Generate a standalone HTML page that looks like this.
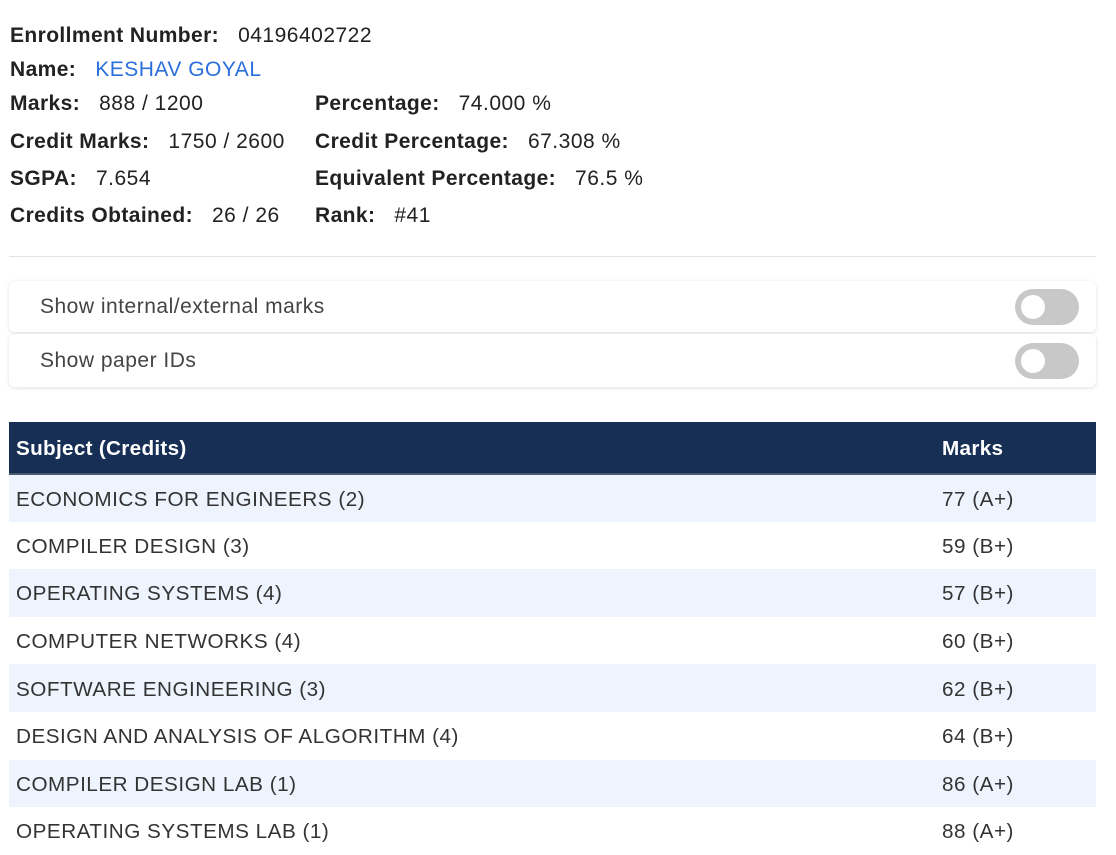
<!DOCTYPE html>
<html><head><style>
body{margin:0;width:1116px;height:853px;overflow:hidden;background:#fff;font-family:"Liberation Sans",sans-serif;color:#222;letter-spacing:0.5px;}
.info{position:absolute;left:10px;font-size:21px;white-space:nowrap;}
.info b,.c2 b{font-weight:bold;color:#222;letter-spacing:0.4px;}
.c2{position:absolute;left:315px;font-size:21px;white-space:nowrap;}
hr{position:absolute;top:256px;left:9px;width:1087px;margin:0;border:0;border-top:1px solid #e3e3e3;}
.card{position:absolute;left:9px;width:1087px;background:#fff;border-radius:6px;box-shadow:0 1px 4px rgba(0,0,0,0.12);font-size:21px;color:#444;}
.card span{position:absolute;left:31px;top:50%;transform:translateY(-50%);}
.tg{position:absolute;left:1006px;top:50%;transform:translateY(-50%);width:64px;height:36px;border-radius:18px;background:#c8c8c8;}
.tg:after{content:"";position:absolute;left:6px;top:6px;width:24px;height:24px;border-radius:50%;background:#fff;}
table{position:absolute;top:422px;left:9px;width:1087px;border-collapse:collapse;font-size:20.7px;table-layout:fixed;}
th{background:#172e55;color:#fff;text-align:left;height:48px;padding:3px 0 0 7px;border-bottom:2px solid #4a5870;font-weight:bold;letter-spacing:0.3px;}
td{height:47.6px;padding:3px 0 0 7px;color:#333;box-sizing:border-box;}
tr:nth-child(even) td{background:#edf4fe;}
</style></head><body>
<div class="info" style="top:24px"><b>Enrollment Number:</b>&nbsp;&nbsp; 04196402722</div>
<div class="info" style="top:58px"><b>Name:</b>&nbsp;&nbsp; <span style="color:#2a6fdb">KESHAV GOYAL</span></div>
<div class="info" style="top:92px"><b>Marks:</b>&nbsp;&nbsp; 888 / 1200</div>
<div class="c2" style="top:92px"><b>Percentage:</b>&nbsp;&nbsp; 74.000 %</div>
<div class="info" style="top:130px"><b>Credit Marks:</b>&nbsp;&nbsp; 1750 / 2600</div>
<div class="c2" style="top:130px"><b>Credit Percentage:</b>&nbsp;&nbsp; 67.308 %</div>
<div class="info" style="top:167px"><b>SGPA:</b>&nbsp;&nbsp; 7.654</div>
<div class="c2" style="top:167px"><b>Equivalent Percentage:</b>&nbsp;&nbsp; 76.5 %</div>
<div class="info" style="top:204px"><b>Credits Obtained:</b>&nbsp;&nbsp; 26 / 26</div>
<div class="c2" style="top:204px"><b>Rank:</b>&nbsp;&nbsp; #41</div>
<hr>
<div class="card" style="top:281px;height:51px"><span>Show internal/external marks</span><div class="tg"></div></div>
<div class="card" style="top:334px;height:53px"><span>Show paper IDs</span><div class="tg"></div></div>
<table>
<colgroup><col style="width:926px"><col style="width:161px"></colgroup>
<tr><th>Subject (Credits)</th><th>Marks</th></tr>
<tr><td>ECONOMICS FOR ENGINEERS (2)</td><td>77 (A+)</td></tr>
<tr><td>COMPILER DESIGN (3)</td><td>59 (B+)</td></tr>
<tr><td>OPERATING SYSTEMS (4)</td><td>57 (B+)</td></tr>
<tr><td>COMPUTER NETWORKS (4)</td><td>60 (B+)</td></tr>
<tr><td>SOFTWARE ENGINEERING (3)</td><td>62 (B+)</td></tr>
<tr><td>DESIGN AND ANALYSIS OF ALGORITHM (4)</td><td>64 (B+)</td></tr>
<tr><td>COMPILER DESIGN LAB (1)</td><td>86 (A+)</td></tr>
<tr><td>OPERATING SYSTEMS LAB (1)</td><td>88 (A+)</td></tr>
</table>
</body></html>
